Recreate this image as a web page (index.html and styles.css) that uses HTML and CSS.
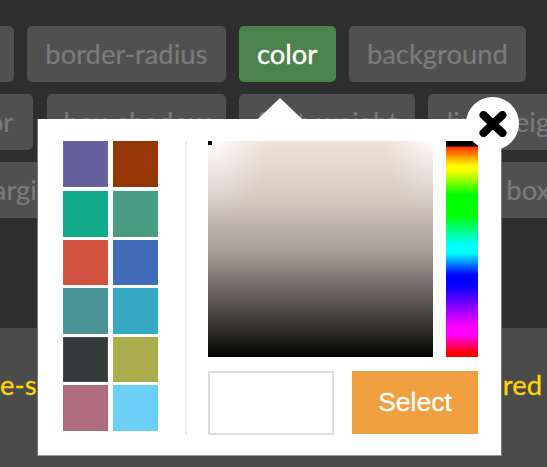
FILE: index.html
```html
<!DOCTYPE html>
<html lang="en">
<head>
<meta charset="utf-8">
<title>Color picker</title>
<link rel="stylesheet" href="styles.css">
</head>
<body>
<div class="page">
  <section class="tags">
    <div class="row row-one">
      <span class="tag tag-first">top</span>
      <span class="tag">border-radius</span>
      <span class="tag tag-active">color</span>
      <span class="tag">background</span>
    </div>
    <div class="row row-two">
      <span class="tag tag-border">border-color</span>
      <span class="tag tag-box">box-shadow</span>
      <span class="tag tag-weight">font-weight</span>
      <span class="tag">line-height</span>
    </div>
    <div class="row row-three">
      <span class="tag tag-margin">margin</span>
      <span class="tag tag-spacer">font-size</span>
      <span class="tag">box-sizing</span>
    </div>
  </section>
  <section class="result">
    <span>e-se</span>
    <span>red</span>
  </section>

  <div class="modal">
    <div class="arrow"></div>
    <button class="close" type="button" aria-label="Close">
      <svg viewBox="0 0 28 26" width="28" height="26"><path d="M4.5 4 23.5 22M23.5 4 4.5 22" fill="none" stroke="#000" stroke-width="8" stroke-linecap="round"/></svg>
    </button>
    <div class="swatches">
      <div class="swatch s1"></div><div class="swatch s2"></div>
      <div class="swatch s3"></div><div class="swatch s4"></div>
      <div class="swatch s5"></div><div class="swatch s6"></div>
      <div class="swatch s7"></div><div class="swatch s8"></div>
      <div class="swatch s9"></div><div class="swatch s10"></div>
      <div class="swatch s11"></div><div class="swatch s12"></div>
    </div>
    <div class="divider"></div>
    <div class="picker">
      <div class="picker-top">
        <div class="sv"><div class="handle"></div></div>
        <div class="hue"></div>
      </div>
      <div class="picker-bottom">
        <div class="preview"></div>
        <button class="select" type="button">Select</button>
      </div>
    </div>
  </div>
</div>
</body>
</html>
```
FILE: styles.css
```css
* { box-sizing: border-box; }
html, body { margin: 0; padding: 0; }
body { width: 547px; height: 467px; overflow: hidden; font-family: Lato, "Open Sans", sans-serif; }
.page { position: relative; width: 547px; height: 467px; overflow: hidden; background: #4b4b4b; }

.tags { height: 328px; background: #2e2e2e; padding-top: 26px; display: flex; flex-direction: column; gap: 12px; overflow: hidden; }
.row { display: flex; gap: 13px; height: 56px; white-space: nowrap; flex: none; }
.row-one { margin-left: -88px; }
.row-two { margin-left: -155px; }
.row-three { margin-left: -48px; }
.tag { flex: none; height: 56px; padding: 0 18.3px; border-radius: 5px; background: #505050; color: #7b7b7b; font-size: 27.4px; line-height: 56px; text-align: center; -webkit-text-stroke: 0.2px #7b7b7b; }
.tag-first { width: 102px; }
.tag-active { background: #4c824c; color: #fff; -webkit-text-stroke: 0.4px #fff; }
.tag-border { padding-right: 20px; }
.tag-box { width: 179px; margin-left: 1px; padding: 0; }
.tag-weight { width: 176px; padding: 0; }
.tag-margin { width: 130px; text-align: left; }
.tag-spacer { width: 380px; }

.result { height: 139px; display: flex; justify-content: space-between; padding: 41px 5px 0 0; color: #ffd700; font-size: 27.4px; line-height: 32px; -webkit-text-stroke: 0.3px #ffd700; }

.modal { position: absolute; left: 37px; top: 119px; width: 465px; height: 337px; padding: 22px 24px 0 25px; background: #fff; border-left: 1px solid #777; border-bottom: 1px solid #999; border-right: 1px solid #777; display: flex; align-items: flex-start; }
.arrow { position: absolute; left: 220px; top: -21px; width: 0; height: 0; border-left: 22px solid transparent; border-right: 22px solid transparent; border-bottom: 21px solid #fff; }
.close { position: absolute; left: 428px; top: -22px; width: 53px; height: 53px; padding: 0; border: 0; border-radius: 50%; background: #fff; display: flex; align-items: center; justify-content: center; }

.swatches { width: 95px; display: grid; grid-template-columns: 45px 45px; column-gap: 5px; row-gap: 3px; flex: none; }
.swatch { height: 45.5px; }
.s1, .s2 { margin-bottom: 1.5px; }
.s1 { background: #655f9b; box-shadow: inset 0 0 0 1px #6f6aa6; }
.s2 { background: #953704; }
.s3 { background: #14ab88; box-shadow: inset 0 0 0 1px #10ae8a; }
.s4 { background: #499b82; }
.s5 { background: #cf533e; box-shadow: inset 0 0 0 1px #d6523c; }
.s6 { background: #436cb8; }
.s7 { background: #489496; }
.s8 { background: #37a9c4; }
.s9 { background: #353a3b; box-shadow: inset 0 0 0 1px #484c4d; }
.s10 { background: #abac4c; }
.s11 { background: #b06d80; box-shadow: inset 0 0 0 1px #a9677a; }
.s12 { background: #6ccff5; }

.divider { width: 2px; height: 293px; margin-left: 27px; background: #eeeeee; flex: none; }

.picker { width: 270px; margin-left: 21px; flex: none; }
.picker-top { display: flex; justify-content: space-between; height: 216px; }
.sv { position: relative; width: 225px; height: 216px; background:
  linear-gradient(to bottom, rgba(0,0,0,0) 0, rgba(0,0,0,0.1) 25%, rgba(0,0,0,0.29) 50%, rgba(0,0,0,0.63) 75%, rgba(0,0,0,0.84) 90%, #000 100%),
  radial-gradient(ellipse 60px 85px at 0 0, #fff, rgba(255,255,255,0)),
  radial-gradient(ellipse 48px 75px at 100% 0, rgba(255,255,255,0.85), rgba(255,255,255,0)),
  #f0e2d8; }
.handle { position: absolute; left: 0; top: 0; width: 4px; height: 4px; background: #000; }
.hue { width: 32px; height: 216px; background: linear-gradient(to bottom, #000 0, #000 5px, #f30 6px, #ff0 25px, #ff0 29px, #0f0 54px, #0f0 74px, #0ff 104px, #0ff 112px, #00f 134px, #00f 144px, #f0f 185px, #f0f 194px, #f00 212px, #f00 216px); }
.picker-bottom { display: flex; justify-content: space-between; margin-top: 14px; }
.preview { width: 126px; height: 64px; background: #fff; border: 2px solid #dedede; }
.select { width: 126px; height: 63px; padding: 0; border: 0; background: #f0a040; color: #fff; font-family: "Liberation Sans", Arial, sans-serif; font-size: 26.5px; -webkit-text-stroke: 0.3px #fff; }
```
